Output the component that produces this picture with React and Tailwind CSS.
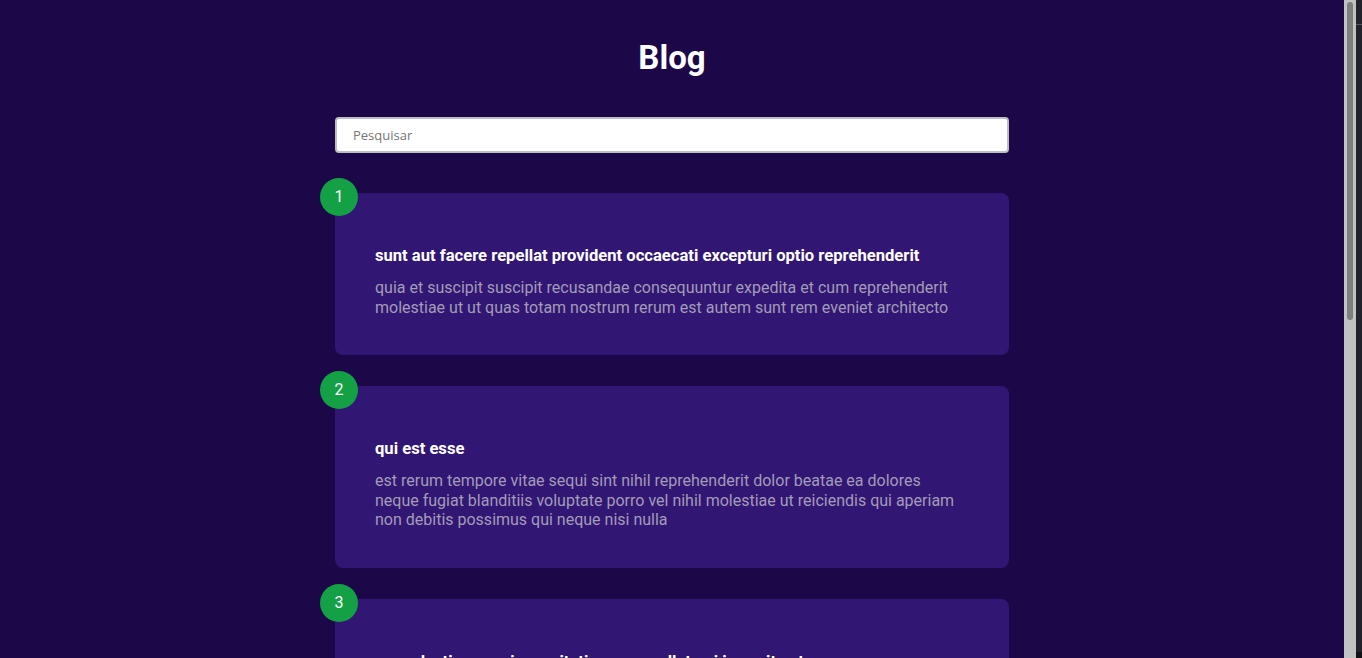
const posts = [
  {
    id: 1,
    title: "sunt aut facere repellat provident occaecati excepturi optio reprehenderit",
    lines: [
      "quia et suscipit suscipit recusandae consequuntur expedita et cum reprehenderit",
      "molestiae ut ut quas totam nostrum rerum est autem sunt rem eveniet architecto",
    ],
  },
  {
    id: 2,
    title: "qui est esse",
    lines: [
      "est rerum tempore vitae sequi sint nihil reprehenderit dolor beatae ea dolores",
      "neque fugiat blanditiis voluptate porro vel nihil molestiae ut reiciendis qui aperiam",
      "non debitis possimus qui neque nisi nulla",
    ],
  },
  {
    id: 3,
    title: "ea molestias quasi exercitationem repellat qui ipsa sit aut",
    lines: [
      "et iusto sed quo iure voluptatem occaecati omnis eligendi aut ad",
      "voluptatem doloribus vel accusantium quis pariatur molestiae porro eius odio et labore et velit aut",
    ],
  },
]

const PostCard = ({ post }) => {
  return (
    <div className="relative shrink-0 bg-[#311673] rounded-lg pt-[53px] pb-[38px] px-10">
      <div className="absolute -top-[15px] -left-[15px] w-[38px] h-[38px] rounded-full bg-[#14a044] flex items-center justify-center text-white text-base">
        {post.id}
      </div>
      <h2 className="text-white font-bold text-[16.6px] leading-5">{post.title}</h2>
      <p className="mt-3 text-[#a39cb7] text-base leading-[19.5px]">
        {post.lines.map((line) => (
          <span key={line} className="block">{line}</span>
        ))}
      </p>
    </div>
  )
}

export default function App() {
  return (
    <div className="h-[658px] w-full overflow-hidden flex bg-[#1c0848] font-['Roboto',sans-serif]">
      <div className="flex-1 flex flex-col items-center">
        <h1 className="shrink-0 mt-[40px] text-white text-[33px] font-bold leading-9">Blog</h1>
        <input
          type="text"
          placeholder="Pesquisar"
          className="shrink-0 mt-[41px] w-[674px] h-9 rounded border-2 border-[#bdbdc4] bg-white pl-4 text-[13px] text-gray-800 placeholder:text-[#757575] font-['Open_Sans',sans-serif] outline-none"
        />
        <div className="shrink-0 mt-10 w-[674px] flex flex-col gap-[31px]">
          {posts.map((post) => (
            <PostCard key={post.id} post={post} />
          ))}
        </div>
      </div>
      {/* fake browser scrollbar */}
      <div className="w-3 h-full bg-[#c1c3c2] pt-[2px] flex justify-center">
        <div className="w-[6px] h-[318px] rounded-full bg-[#7b7f7e]"></div>
      </div>
      <div className="w-[6px] h-full bg-[#22222a] flex flex-col">
        <div className="h-6"></div>
        <div className="h-px bg-[#55555c]"></div>
        <div className="flex-1"></div>
        <div className="h-[6px] bg-[#121214]"></div>
      </div>
    </div>
  )
}
